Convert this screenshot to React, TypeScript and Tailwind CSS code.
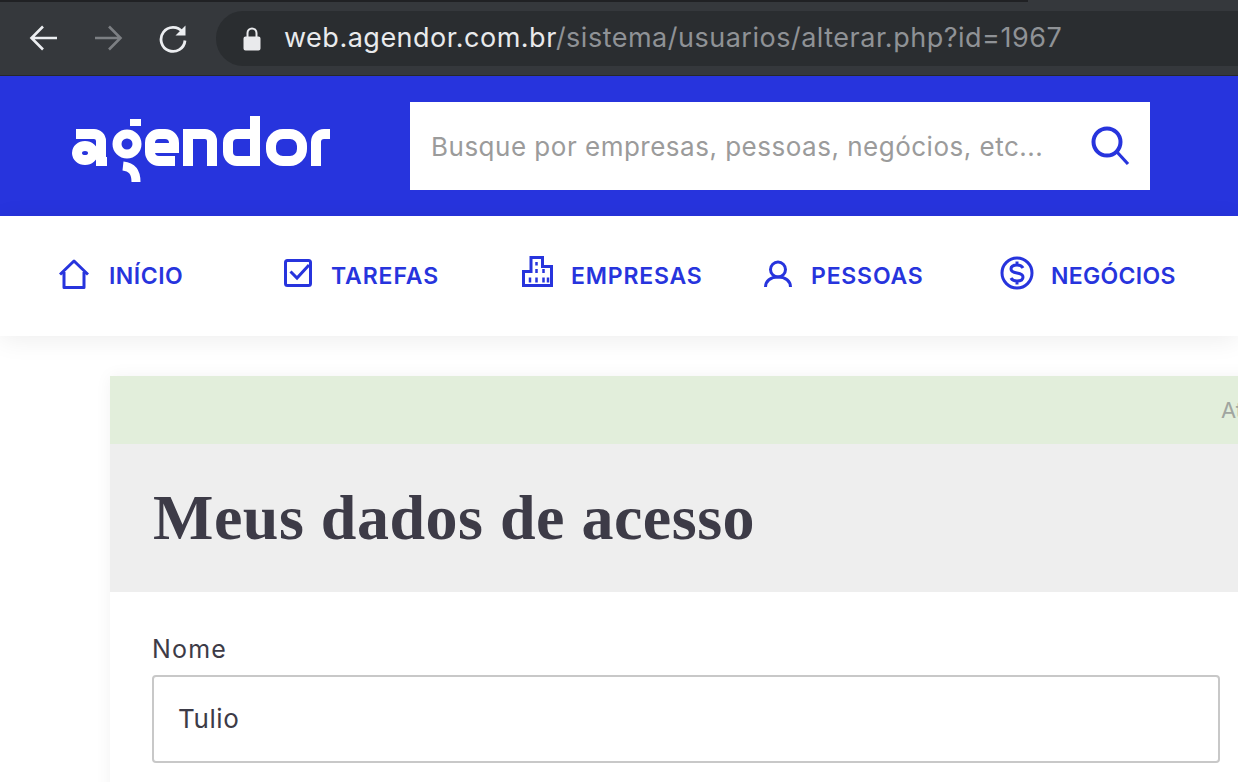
const blue = 'text-[#2734dd]';

// Browser chrome on top of the page
function BrowserBar() {
  return (
    <div className="relative flex h-[76px] items-center border-b border-[#26282b] bg-[#35383c] pl-[29px]">
      <div className="absolute left-0 top-0 h-[2px] w-[1028px] bg-[#202124]" />
      <svg className="h-[30px] w-[30px] text-[#eceef1]" viewBox="0 0 30 30" fill="none" stroke="currentColor" strokeWidth="2.6">
        <path d="M28 15H3M14 3.500 2.500 15 14 26.500" />
      </svg>
      <svg className="ml-[34px] h-[30px] w-[30px] text-[#7c7f83]" viewBox="0 0 30 30" fill="none" stroke="currentColor" strokeWidth="2.6">
        <path d="M2 15h25M16 3.500 27.500 15 16 26.500" />
      </svg>
      <svg className="ml-[35px] h-[30px] w-[30px] text-[#eceef1]" viewBox="0 0 30 30" fill="none" stroke="currentColor" strokeWidth="2.8">
        <path d="M24.500 9A12 12 0 1 0 27 17.500" />
        <path d="M27.500 2.500V12.500H17.500Z" fill="currentColor" stroke="none" />
      </svg>
      <div className="ml-[28px] mt-[2px] flex h-[55px] flex-1 items-center rounded-l-[27px] bg-[#2a2d30] pl-[27px] font-['Inter',sans-serif] text-[27px] tracking-[0.5px] text-[#e9eaec]">
        <svg className="h-[24px] w-[18px] text-[#e9eaec]" viewBox="0 0 18 24" fill="currentColor">
          <path d="M2.500 9.500h13a2 2 0 0 1 2 2v10a2 2 0 0 1-2 2h-13a2 2 0 0 1-2-2v-10a2 2 0 0 1 2-2Z" />
          <path d="M4.500 10V6a4.500 4.500 0 0 1 9 0v4" fill="none" stroke="currentColor" strokeWidth="2" />
        </svg>
        <span className="ml-[23px] whitespace-nowrap">
          web.agendor.com.br<span className="text-[#8f9296]">/sistema/usuarios/alterar.php?id=1967</span>
        </span>
      </div>
    </div>
  );
}

function Logo() {
  return (
    <svg className="mt-[6px] h-[66px] w-[258px] shrink-0 text-white" viewBox="0 0 258 66" fill="none" stroke="currentColor" strokeWidth="10" aria-label="agendor">
      {/* a */}
      <path d="M4 18H22a7 7 0 0 1 7 7V50" />
      <ellipse cx="13" cy="37" rx="8" ry="7" />
      <path d="M24 45.500h11" strokeWidth="9" />
      {/* g */}
      <circle cx="55" cy="28" r="10" strokeWidth="9" />
      <path d="M58 3h11v7H58Z" fill="currentColor" stroke="none" />
      <path d="M51 50c9 1 13 6 13 16" strokeWidth="9" />
      {/* e */}
      <path d="M103 45H87a9 9 0 0 1-9-9V27a9 9 0 0 1 9-9h6a9 9 0 0 1 9 9v5H78" />
      {/* n */}
      <path d="M116 50V18H133a7 7 0 0 1 7 7V50" />
      {/* d */}
      <path d="M183 0V50M183 45H165a9 9 0 0 1-9-9V27a9 9 0 0 1 9-9H183" />
      {/* o */}
      <rect x="199" y="18" width="31" height="27" rx="12" />
      {/* r */}
      <path d="M244 50V26a8 8 0 0 1 8-8H258" />
    </svg>
  );
}

function Header() {
  return (
    <header className="flex h-[140px] items-center bg-[#2734dd] pl-[72px]">
      <Logo />
      <div className="ml-[80px] flex h-[88px] w-[740px] items-center justify-between bg-white pl-[21px] pr-[20px]">
        <span className="font-['Inter',sans-serif] text-[26px] tracking-[0.5px] text-[#9b9b9b]">Busque por empresas, pessoas, negócios, etc...</span>
        <svg className={`h-[40px] w-[40px] ${blue}`} viewBox="0 0 40 40" fill="none" stroke="currentColor">
          <circle cx="17" cy="16" r="13.500" strokeWidth="4" />
          <path d="M27 26 38 38" strokeWidth="3.200" />
        </svg>
      </div>
    </header>
  );
}

const icons = {
  home: (
    <path d="M1 15.500 15 2l14 13.500M5 13v15.500h20V13" strokeLinejoin="round" />
  ),
  check: (
    <>
      <rect x="1.500" y="1.500" width="25" height="25" rx="2" />
      <path d="M6.500 12.500 13 19 25 6" />
    </>
  ),
  building: (
    <>
      <path d="M1.500 29.500V15.500H9V1.500H20.500V10.500H29.500V29.500Z" />
      <path d="M14.500 6v3.500M14.500 13v4M14.500 21.500v5M21.500 13v4M8 21.500v5M21.500 21.500v5M26 21.500v5" strokeWidth="2.500" />
    </>
  ),
  user: (
    <>
      <circle cx="14" cy="9.500" r="7.500" />
      <path d="M1.500 27c0-6 5-10 12.500-10s12.500 4 12.500 10" />
    </>
  ),
  dollar: (
    <>
      <circle cx="17" cy="17" r="15" />
      <path d="M23 12c-1-2-3.500-3-6-3-3.500 0-6 1.500-6 4s2.500 3.500 6 4 6 1.500 6 4-2.500 4-6 4c-2.500 0-5-1-6-3M17 5.500V9M17 25v3.500" />
    </>
  ),
};

const navItems = [
  { label: 'INÍCIO', icon: icons.home, box: 'w-[225px]', iconClass: '-mt-[5px] h-[30px] w-[30px]', text: 'ml-[20px] tracking-[0.5px]', viewBox: '0 0 30 30' },
  { label: 'TAREFAS', icon: icons.check, box: 'w-[238px]', iconClass: '-mt-[6px] h-[28px] w-[28px]', text: 'ml-[19px] tracking-[0.9px]', viewBox: '0 0 28 28' },
  { label: 'EMPRESAS', icon: icons.building, box: 'w-[242px]', iconClass: '-mt-[9px] h-[31px] w-[31px]', text: 'ml-[18px] tracking-[0.8px]', viewBox: '0 0 31 31' },
  { label: 'PESSOAS', icon: icons.user, box: 'w-[236px]', iconClass: '-mt-[5px] h-[27px] w-[28px]', text: 'ml-[19px] tracking-[0.8px]', viewBox: '0 0 28 27' },
  { label: 'NEGÓCIOS', icon: icons.dollar, box: 'w-[238px]', iconClass: '-mt-[6px] h-[34px] w-[34px]', text: 'ml-[17px] tracking-[0.3px]', viewBox: '0 0 34 34' },
];

function Nav() {
  return (
    <nav className="relative flex h-[120px] items-center bg-white pl-[59px] shadow-[0_4px_24px_rgba(0,0,0,0.07)]">
      {navItems.map((item) => (
        <div key={item.label} className={`flex shrink-0 items-center ${item.box} ${blue}`}>
          <svg className={item.iconClass} viewBox={item.viewBox} fill="none" stroke="currentColor" strokeWidth="3">
            {item.icon}
          </svg>
          <span className={`${item.text} font-['Inter',sans-serif] text-[23px] font-semibold`}>{item.label}</span>
        </div>
      ))}
    </nav>
  );
}

function Card() {
  return (
    <main className="ml-[110px] mt-[40px] h-[600px] w-[1400px] bg-white shadow-[0_0_16px_rgba(0,0,0,0.05)]">
      <div className="flex h-[68px] items-center bg-[#e2eedb] pl-[1111px] font-['Inter',sans-serif] text-[22px] text-[#a0a5a0]">
        Atualizado com sucesso
      </div>
      <div className="flex h-[148px] items-center bg-[#eeeeee] pl-[43px]">
        <h1 className="font-['Liberation_Serif',serif] text-[64px] font-bold tracking-[0.5px] text-[#3d3b47]">Meus dados de acesso</h1>
      </div>
      <div className="px-[42px] pt-[41px] font-['Inter',sans-serif] text-[#3d3b47]">
        <label className="block text-[25px] leading-[32px] tracking-[1.2px]">Nome</label>
        <div className="mt-[10px] flex h-[88px] w-[1068px] items-center rounded-[4px] border-2 border-[#c8c8c8] pb-[2px] pl-[24px] text-[26px] tracking-[0.6px]">
          Tulio
        </div>
      </div>
    </main>
  );
}

export default function App() {
  return (
    <div className="h-[782px] overflow-hidden bg-white">
      <BrowserBar />
      <Header />
      <Nav />
      <Card />
    </div>
  );
}
